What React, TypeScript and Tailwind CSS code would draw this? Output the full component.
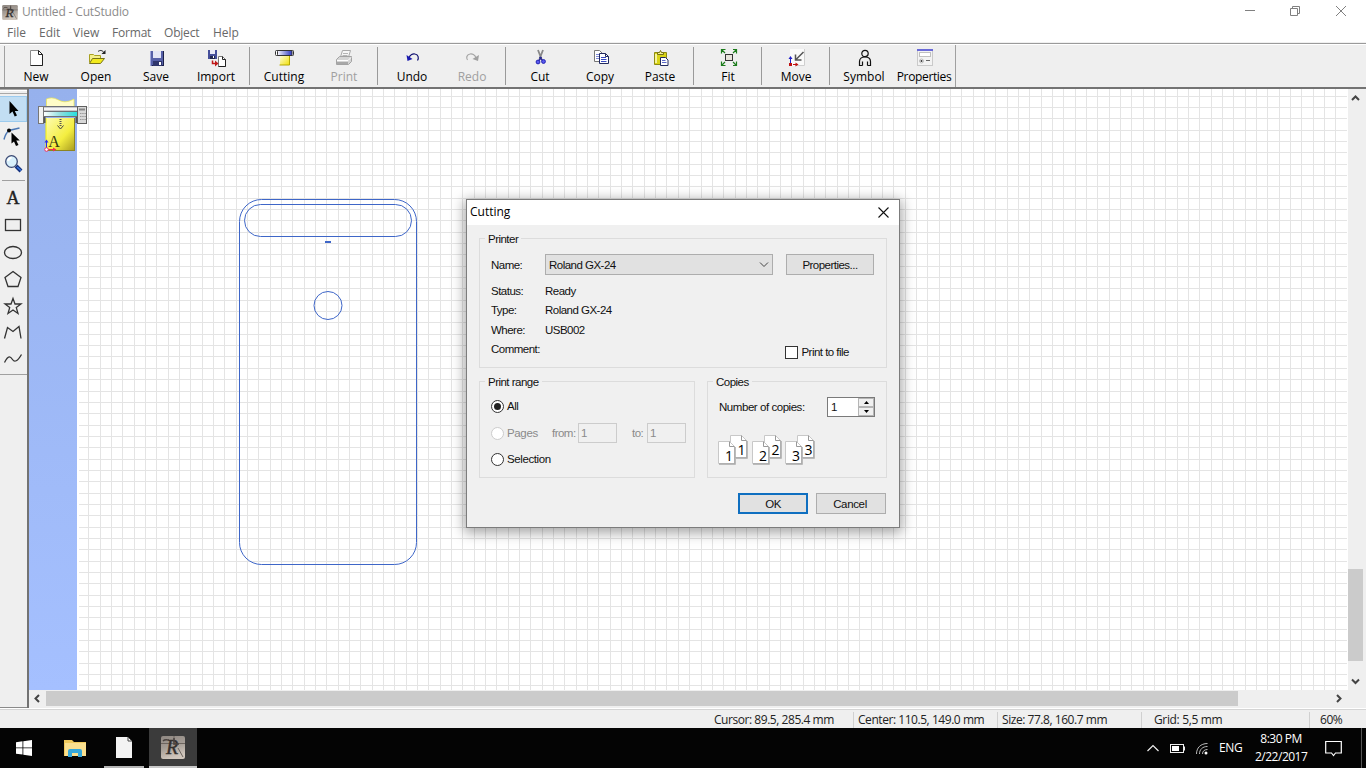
import type { ReactNode } from "react";

const GRID_STEP = 11.339;

interface ToolItem {
  label: string;
  icon: ReactNode;
  disabled?: boolean;
}

function Icon({ children, size = 20 }: { children: ReactNode; size?: number }) {
  return (
    <svg width={size} height={size} viewBox={`0 0 ${size} ${size}`} fill="none">
      {children}
    </svg>
  );
}

const newIcon = (
  <Icon>
    <path d="M4.5 1.5h8l4 4v11h-12z" fill="#fdfdfd" stroke="#8a8a8a" />
    <path d="M16.5 5.5v11h-12" stroke="#222" />
    <path d="M12.5 1.5v4h4z" fill="#fff" stroke="#222" />
  </Icon>
);

const openIcon = (
  <Icon>
    <path d="M3.5 13.5v-8h4l1 1h6v3" fill="#f4f08a" stroke="#a8a020" />
    <path d="M3.5 14.5l3-5h12l-4 5z" fill="#f2ea1c" stroke="#77721a" />
    <path d="M12 2.500c2-1.500 4-1.500 6 1" stroke="#222" />
    <path d="M19.500 1v4h-4z" fill="#222" />
  </Icon>
);

const saveIcon = (
  <Icon>
    <path d="M4 2h14v15H5l-1-1z" fill="#5660a8" />
    <path d="M4 2h1v14H4z" fill="#9fa6dc" />
    <path d="M17 2h1v15H6v-1h11z" fill="#1c2048" />
    <rect x="7" y="2" width="8" height="7" fill="#e4e6f6" />
    <rect x="7" y="12" width="9" height="5" fill="#30366c" />
    <rect x="13" y="13" width="2" height="3" fill="#fff" />
  </Icon>
);

const importIcon = (
  <Icon>
    <path d="M2 1h9v9H2z" fill="#454f9a" />
    <rect x="4" y="1" width="5" height="4" fill="#e8e9f7" />
    <rect x="4" y="7" width="5" height="3" fill="#20264f" />
    <rect x="7" y="7" width="1" height="2" fill="#fff" />
    <path d="M12.500 7.500h4l3 3v7h-7z" fill="#fff" stroke="#777" />
    <path d="M16.500 7.500v3h3v7h-7" stroke="#222" />
    <path d="M6.500 11.500v3h3" stroke="#c01818" strokeWidth="1.500" />
    <path d="M9 11.500l3.500 3-3.500 3z" fill="#c01818" />
  </Icon>
);

const cuttingIcon = (
  <Icon>
    <defs>
      <linearGradient id="cutBar">
        <stop offset="0" stopColor="#fff" />
        <stop offset="1" stopColor="#2e38c0" />
      </linearGradient>
      <linearGradient id="cutPaper" x1="0" y1="0" x2="1" y2="1">
        <stop offset="0" stopColor="#fffde0" />
        <stop offset="1" stopColor="#f1e000" />
      </linearGradient>
    </defs>
    <rect x="6" y="6" width="10" height="10" fill="url(#cutPaper)" />
    <path d="M15.500 7v9h-10" stroke="#b5a800" />
    <rect x="3" y="2" width="15" height="4" fill="url(#cutBar)" />
    <path d="M3 1.500h15M3 6.500h15" stroke="#333" />
    <rect x="1.500" y="1.500" width="2" height="5" rx="1" fill="#fff" stroke="#333" />
    <rect x="18" y="1.500" width="1.500" height="5" rx=".8" fill="#fff" stroke="#333" />
  </Icon>
);

const printIcon = (
  <Icon>
    <path d="M6.500 8l2-6.500h8l-2 6.500z" fill="#f7f7f7" stroke="#aaa" />
    <path d="M9 4.500h5M8.500 6.500h5" stroke="#b5b5b5" />
    <path d="M2.500 10.500l3-3h12v5l-3 3h-12z" fill="#d5d5d5" stroke="#a3a3a3" />
    <path d="M3 11.500h11l3-3" stroke="#fff" />
    <path d="M3 14h11" stroke="#999" strokeWidth="1.500" />
  </Icon>
);

const undoIcon = (
  <Icon>
    <path d="M7 9c1-3.500 4-4.500 6-4 3.500.7 4 4 2.500 6.500" stroke="#101070" strokeWidth="1.200" />
    <path d="M4.500 6l1 6 5-2z" fill="#1a1ab0" />
  </Icon>
);

const redoIcon = (
  <Icon>
    <path d="M14 9c-1-3.500-4-4.500-6-4-3.500.7-4 4-2.500 6" stroke="#a5a5a5" strokeWidth="1.200" />
    <path d="M17 6l-1 6-5.500-2z" fill="#a0a0a0" />
  </Icon>
);

const cutIcon = (
  <Icon>
    <path d="M8 1l3.500 9M13 1L9.500 10" stroke="#888" strokeWidth="1.800" />
    <path d="M9.500 8l3.500 4M11.500 8L8.500 12" stroke="#2a2a90" strokeWidth="1.400" />
    <circle cx="8" cy="13" r="1.900" fill="#5a5af0" stroke="#2424b4" />
    <circle cx="13.500" cy="12.500" r="1.900" fill="#5a5af0" stroke="#2424b4" />
  </Icon>
);

const copyIcon = (
  <Icon>
    <path d="M4.500 1.500h5l3 3v8h-8z" fill="#fff" stroke="#777" />
    <path d="M6 5.500h4M6 7.500h4M6 9.500h4" stroke="#7c88d8" />
    <path d="M9.500 4.500h6l3 3v7h-9z" fill="#fff" stroke="#222a60" />
    <path d="M11 8.500h5M11 10.500h5.500M11 12.500h5.500" stroke="#3848c0" />
    <path d="M15.500 4.500v3h3" stroke="#222a60" />
  </Icon>
);

const pasteIcon = (
  <Icon>
    <path d="M4.500 3.500h12v12h-12z" fill="#d9d416" stroke="#8e8a12" />
    <path d="M6 5v9" stroke="#f6f39a" strokeWidth="2" />
    <path d="M7.500 5.500v-2h2l1-2 1 2h2v2z" fill="#f4f09a" stroke="#777210" />
    <path d="M10.500 8.500h5l2.500 2.500v5.500h-7.500z" fill="#fff" stroke="#222a60" />
    <path d="M12 11.500h3.500M12 13.500h4.500" stroke="#5a68c8" />
  </Icon>
);

const fitIcon = (
  <Icon>
    <rect x="7.500" y="5.500" width="7" height="6" fill="#e8e4dc" stroke="#333" />
    <path
      d="M3.500 4.500v-4h4M4 1l3 3M15 .5h3.500v4M18 1l-3 3M3.500 12.500v4h4M4 16l3-3M15 16.500h3.500v-4M18 16l-3-3"
      stroke="#1c7c1c"
      strokeWidth="1.200"
    />
  </Icon>
);

const moveIcon = (
  <Icon>
    <rect x="4" y="0" width="15" height="17" fill="#fafafa" />
    <path d="M18.500 0v16.500H9" stroke="#cfcfcf" />
    <path d="M17.500 3L10 10.500M9.500 5.500v5.500h6" stroke="#555" strokeWidth="1.500" />
    <path d="M4.500 9v5" stroke="#2020c8" />
    <path d="M2.500 10l2-3 2 3z" fill="#2020c8" />
    <rect x="3" y="14" width="3" height="3" fill="#c01010" />
    <path d="M7 15.500h3" stroke="#c01010" />
    <path d="M9.500 13.500l3 2-3 2z" fill="#c01010" />
  </Icon>
);

const symbolIcon = (
  <Icon>
    <circle cx="11" cy="4.500" r="3.200" stroke="#111" strokeWidth="1.200" />
    <path
      d="M8.500 16.500v-4M13.500 16.500v-4M8.500 16.500h-3v-4c0-3 2-4.500 5.500-4.500s5.500 1.500 5.500 4.500v4h-3"
      stroke="#111"
      strokeWidth="1.200"
    />
  </Icon>
);

const propertiesIcon = (
  <Icon>
    <rect x="3.500" y=".5" width="15" height="16" fill="#f3f3f3" stroke="#cacaca" />
    <rect x="3" y="0" width="16" height="2" fill="#6a6ad8" />
    <rect x="5.500" y="3.500" width="11" height="4" fill="#fff" stroke="#c0c0c0" />
    <circle cx="7.500" cy="12" r="2" fill="#fff" stroke="#bbb" />
    <circle cx="7.500" cy="12" r="1" fill="#333" />
    <path d="M12 11.500h4" stroke="#666" />
  </Icon>
);

const toolbarGroups: ToolItem[][] = [
  [
    { label: "New", icon: newIcon },
    { label: "Open", icon: openIcon },
    { label: "Save", icon: saveIcon },
    { label: "Import", icon: importIcon },
  ],
  [
    { label: "Cutting", icon: cuttingIcon },
    { label: "Print", icon: printIcon, disabled: true },
  ],
  [
    { label: "Undo", icon: undoIcon },
    { label: "Redo", icon: redoIcon, disabled: true },
  ],
  [
    { label: "Cut", icon: cutIcon },
    { label: "Copy", icon: copyIcon },
    { label: "Paste", icon: pasteIcon },
  ],
  [{ label: "Fit", icon: fitIcon }],
  [{ label: "Move", icon: moveIcon }],
  [
    { label: "Symbol", icon: symbolIcon },
    { label: "Properties", icon: propertiesIcon },
  ],
];

function AppLogo({ big = false }: { big?: boolean }) {
  return (
    <svg width={big ? 24 : 16} height={big ? 23 : 15} viewBox="0 0 24 23">
      <defs>
        <linearGradient id="stone" x1="0" y1="0" x2=".3" y2="1">
          <stop offset="0" stopColor="#8f8882" />
          <stop offset=".5" stopColor="#a39b94" />
          <stop offset="1" stopColor="#d0c6bc" />
        </linearGradient>
      </defs>
      <rect width="24" height="23" rx="2" fill="url(#stone)" />
      <path d="M0 7.500h24M13 0v9M17 12l5 9" stroke="#6c645e" strokeWidth="1" />
      <text x="5" y="18" fontFamily="Liberation Serif, serif" fontSize="20" fontStyle="italic" fill="#35302e" stroke="#35302e" strokeWidth=".4">
        R
      </text>
      <path d="M2 5c2-2 4-1 6-1M13 2v6h5" stroke="#4a4340" strokeWidth="1.500" fill="none" />
    </svg>
  );
}

function TitleBar() {
  return (
    <div className="flex h-6 items-center bg-white pl-0.5 text-[#8c8c8c]">
      <AppLogo />
      <span className="ml-1 tracking-[-0.15px]">Untitled - CutStudio</span>
      <svg className="ml-auto mr-[18px]" width="104" height="12" viewBox="0 0 104 12" fill="none" stroke="#808080">
        <path d="M1 4.500h10" />
        <path d="M46.500 2.500h7v7h-7zM48.500 2.500v-2h7v7h-2" />
        <path d="M92 0l10 10M102 0L92 10" />
      </svg>
    </div>
  );
}

function MenuBar() {
  return (
    <div className="flex h-[18px] items-center bg-white pl-[7px] text-[#686868]">
      <span className="w-8">File</span>
      <span className="w-[34px]">Edit</span>
      <span className="w-[39px]">View</span>
      <span className="w-[52px] tracking-[-0.2px]">Format</span>
      <span className="w-[49px] tracking-[-0.2px]">Object</span>
      <span>Help</span>
    </div>
  );
}

function Toolbar() {
  return (
    <div className="flex h-[46px] border-t border-b-2 border-t-[#9a9a9a] border-b-[#737373] bg-[#efefef] shadow-[inset_0_1px_0_#fff]">
      <div className="mt-0.5 mr-px w-[5px] border-r border-[#a0a0a0]" />
      {toolbarGroups.map((group, i) => (
        <div key={i} className="flex">
          {i > 0 && <div className="mt-[3px] mr-1 ml-[3px] h-[38px] w-px bg-[#9a9a9a]" />}
          {group.map((item) => (
            <div key={item.label} className="flex w-[60px] flex-col items-center pt-[5px]">
              {item.icon}
              <span
                className={`h-4 text-[12px] leading-4 whitespace-nowrap ${item.disabled ? "text-[#a0a0a0]" : "text-black"} ${item.label === "Properties" ? "tracking-[-0.35px]" : ""}`}
              >
                {item.label}
              </span>
            </div>
          ))}
        </div>
      ))}
      <div className="mt-px ml-px w-px bg-[#a0a0a0]" />
    </div>
  );
}

// tools of the left strip, drawn in a 27px wide column
function ToolStrip() {
  return (
    <div className="h-[619px] w-[27px] shrink-0 border-b border-[#8a8a8a] bg-[#efefef]">
      <svg width="27" height="618" viewBox="0 89 27 618" fill="none" stroke="#333" strokeWidth="1.300">
        <path d="M0 89.500h27M0 93.500h27" stroke="#a8a8a8" strokeWidth="1" />
        <path d="M0 90.500h27" stroke="#fff" strokeWidth="1" />
        <rect x="-.5" y="96.500" width="27" height="25" fill="#c2def3" stroke="#9ccbee" strokeWidth="1" />
        <path d="M9.500 101v13l3-2.500 2.200 5 2.300-1-2.200-4.500h3.700z" fill="#000" stroke="none" />
        <path d="M4 139.500c1-4 2.500-7 5-9l10.500-2.500" stroke="#4d78b4" strokeWidth="1.500" />
        <circle cx="9" cy="130.500" r="2" fill="#000" stroke="none" />
        <path d="M11.500 132.500v11l2.500-2 2 4.500 2.500-1-2.200-4.500h3.500z" fill="#000" stroke="none" />
        <path d="M16 166l5 5" stroke="#14307c" strokeWidth="4" />
        <path d="M17 167l4 3.500" stroke="#3878e0" strokeWidth="1.500" />
        <circle cx="11.500" cy="161.500" r="5.800" fill="#d8f0fc" stroke="#3b4a74" />
        <path d="M8 161c.5-2 1.500-3 3.500-3.300" stroke="#fff" strokeWidth="2" />
        <path d="M2 180.500h23" stroke="#a0a0a0" strokeWidth="1" />
        <text x="13" y="203.500" textAnchor="middle" fontFamily="Liberation Serif, serif" fontSize="18" fill="#222" stroke="#222" strokeWidth=".4">
          A
        </text>
        <rect x="5.500" y="219.500" width="15" height="11" />
        <ellipse cx="13" cy="252.500" rx="8.500" ry="6" />
        <path d="M13 271.500l8 6-3 9H8l-3-9z" />
        <path d="M13 298.500l2 5.500h6l-4.700 3.600 1.700 5.900-5-3.500-5 3.500 1.700-5.900L5 304h6z" />
        <path d="M4.500 338.500l3-11 5.500 4 6-5 2 12" />
        <path d="M4.500 362.500c4-8 6-6 8-3s5 2 9-5" />
        <path d="M0 374.500h27" stroke="#a0a0a0" strokeWidth="1" />
      </svg>
    </div>
  );
}

function Plotter() {
  return (
    <g>
      <defs>
        <linearGradient id="sheet" x1="0" y1="0" x2="1" y2="1">
          <stop offset="0" stopColor="#fdfbb0" />
          <stop offset=".6" stopColor="#f4ee40" />
          <stop offset="1" stopColor="#a89c20" />
        </linearGradient>
        <linearGradient id="beam">
          <stop offset="0" stopColor="#fff" />
          <stop offset=".5" stopColor="#8adede" />
          <stop offset="1" stopColor="#20dede" />
        </linearGradient>
      </defs>
      <path d="M46.500 108v-9c5-2 8-1 12 1s8 3 15.500-1v9z" fill="#fffcc8" stroke="#f0e84a" strokeWidth=".7" />
      <rect x="46" y="118" width="29" height="32" fill="url(#sheet)" />
      <path d="M46 150.500h29M74.500 118v32" stroke="#8c8420" />
      <path d="M46 118v32" stroke="#f8f400" />
      <rect x="44" y="107" width="34" height="10" fill="#c9c9cc" />
      <rect x="44" y="108" width="34" height="2" fill="#f5f5f5" />
      <path d="M44 106.500h34M44 111.500h34M44 116.500h34" stroke="#6e7076" />
      <rect x="44" y="112" width="34" height="4" fill="url(#beam)" />
      <rect x="38.500" y="106.500" width="5" height="17" fill="#f2f2f2" stroke="#777" />
      <path d="M44.500 117v6M76.500 117v6" stroke="#555" strokeWidth="2" />
      <rect x="77.500" y="106.500" width="9" height="17" fill="#d8d8d8" stroke="#606060" />
      <path d="M79 109.500h6" stroke="#888" strokeWidth="2" />
      <path d="M80 113.500h6M80 116.500h6M80 119.500h6" stroke="#999" strokeDasharray="1.500 .7" />
      <path d="M60.500 119v8" stroke="#555" strokeWidth="2" strokeDasharray="1 1" />
      <path d="M57.500 125.500l3 3.500 3-3.500" stroke="#444" fill="none" />
      <text x="54" y="147" textAnchor="middle" fontFamily="Liberation Serif, serif" fontSize="16" fill="#3a3a10">
        A
      </text>
      <path d="M46.500 148v-7" stroke="#2828f0" />
      <path d="M44.500 142.500l2-3 2 3z" fill="#2828f0" />
      <path d="M47 149.500h7" stroke="#f03050" />
      <path d="M53 147.500l3.500 2-3.500 2z" fill="#f03050" />
      <circle cx="46.500" cy="149.500" r="1.800" fill="#fff" stroke="#f03060" />
    </g>
  );
}

function Canvas() {
  const columns = Array.from({ length: 111 }, (_, i) => Math.round(88.2 + i * GRID_STEP));
  const rows = Array.from({ length: 53 }, (_, i) => Math.round(95.7 + i * GRID_STEP));

  return (
    <svg width="1319" height="601" viewBox="29 89 1319 601" className="block">
      <defs>
        <linearGradient id="margin" x1="0" y1="0" x2="0" y2="1">
          <stop offset="0" stopColor="#96b1ed" />
          <stop offset="1" stopColor="#a5c0ff" />
        </linearGradient>
      </defs>
      <rect x="29" y="89" width="1319" height="601" fill="#fff" />
      <g stroke="#e4e4e4">
        {columns.map((x) => (
          <path key={x} d={`M${x + 0.5} 89v601`} />
        ))}
        {rows.map((y) => (
          <path key={y} d={`M79 ${y + 0.5}H1347`} />
        ))}
      </g>
      <rect x="29" y="89" width="48" height="601" fill="url(#margin)" />
      <g fill="none" stroke="#3e66c8">
        <rect x="239.500" y="199.500" width="177" height="365" rx="22" />
        <rect x="244.500" y="204.500" width="167" height="32" rx="16" />
        <circle cx="328" cy="305.500" r="14" />
        <path d="M325 242h6" strokeWidth="2" />
      </g>
      <Plotter />
    </svg>
  );
}

function VerticalScroll() {
  return (
    <div className="flex h-[601px] w-[15px] flex-col items-center bg-[#efefef]">
      <svg width="15" height="16" viewBox="0 0 15 16" fill="none" stroke="#444" strokeWidth="2">
        <path d="M4 11l3.500-3.500L11 11" />
      </svg>
      <div className="mt-[464px] h-[92px] w-full bg-[#cbcbcb]" />
      <svg className="mt-[11px]" width="15" height="16" viewBox="0 0 15 16" fill="none" stroke="#444" strokeWidth="2">
        <path d="M4 7.500L7.500 11 11 7.500" />
      </svg>
    </div>
  );
}

function HorizontalScroll() {
  return (
    <div className="flex h-[18px] items-center bg-[#efefef] pt-px pb-0.5">
      <svg width="17" height="15" viewBox="0 0 17 15" fill="none" stroke="#444" strokeWidth="2">
        <path d="M10 4L6.500 7.500 10 11" />
      </svg>
      <div className="h-[15px] w-[1192px] bg-[#cbcbcb]" />
      <svg className="ml-[92px]" width="17" height="15" viewBox="0 0 17 15" fill="none" stroke="#444" strokeWidth="2">
        <path d="M7 4l3.500 3.500L7 11" />
      </svg>
    </div>
  );
}

function StatusBar() {
  return (
    <div className="mt-px flex h-[19px] border-t border-[#d4d4d4] bg-[#efefef] pt-0.5 leading-4 tracking-[-0.45px] text-[#222]">
      <div className="ml-[714px] w-[139px]">Cursor: 89.5, 285.4 mm</div>
      <div className="w-36 border-l border-[#d0d0d0] pl-1">Center: 110.5, 149.0 mm</div>
      <div className="w-36 border-l border-[#d0d0d0] pl-1">Size: 77.8, 160.7 mm</div>
      <div className="w-[168px] border-l border-[#d0d0d0] pl-3 tracking-[-0.35px]">Grid: 5,5 mm</div>
      <div className="border-l border-[#d0d0d0] pl-2.5">60%</div>
    </div>
  );
}

function Group({ title, className, children }: { title: string; className: string; children: ReactNode }) {
  return (
    <div className={`border border-[#dcdcdc] ${className}`}>
      <div className="-mt-2 ml-[5px] h-4 w-fit bg-[#f0f0f0] px-[3px] leading-4">{title}</div>
      {children}
    </div>
  );
}

function Radio({ label, checked, disabled }: { label: string; checked?: boolean; disabled?: boolean }) {
  return (
    <div className={`flex items-center ${disabled ? "text-[#8a8a8a]" : ""}`}>
      <div
        className={`mr-[3px] flex size-[13px] items-center justify-center rounded-full border bg-white ${disabled ? "border-[#ccc]" : "border-[#333]"}`}
      >
        {checked && <div className="size-[7px] rounded-full bg-[#222]" />}
      </div>
      {label}
    </div>
  );
}

function CopySheets({ n }: { n: number }) {
  return (
    <svg width="33" height="31" viewBox="0 0 33 31" fill="none">
      <path d="M12.500 1.500h11l5 5v17h-16z" fill="#fff" stroke="#c8c8c8" />
      <path d="M29 7v17H18" stroke="#a8a8a8" strokeWidth="1.500" />
      <path d="M23.500 1.500v5h5" stroke="#999" />
      <text x="19.500" y="21" fontFamily="Open Sans, sans-serif" fontSize="14" fill="#000">{n}</text>
      <path d="M.5 7.500h11l5 5v17H.5z" fill="#fff" stroke="#c8c8c8" />
      <path d="M17 13v17H1" stroke="#a8a8a8" strokeWidth="1.500" />
      <path d="M11.500 7.500v5h5" stroke="#999" />
      <text x="7" y="27" fontFamily="Open Sans, sans-serif" fontSize="14" fill="#000">{n}</text>
    </svg>
  );
}

function CuttingDialog() {
  const details = [
    { label: "Status:", value: "Ready" },
    { label: "Type:", value: "Roland GX-24" },
    { label: "Where:", value: "USB002" },
    { label: "Comment:", value: "" },
  ];

  return (
    <div className="absolute top-[199px] left-[466px] h-[329px] w-[434px] border border-[#7c7c7c] bg-[#f0f0f0] font-['Liberation_Sans',sans-serif] text-[11.5px] tracking-[-0.52px] text-[#111] shadow-[0_3px_12px_2px_rgba(0,0,0,0.35)]">
      <div className="flex h-[25px] items-center bg-white pr-[10px] pl-[3px]">
        <span className="-mt-px font-['Open_Sans',sans-serif] text-[12px] tracking-normal text-black">Cutting</span>
        <svg className="ml-auto" width="11" height="11" viewBox="0 0 11 11" stroke="#111" strokeWidth="1.100">
          <path d="M.5.5l10 10M10.500.5l-10 10" />
        </svg>
      </div>

      <div className="px-3 pt-[13px]">
        <Group title="Printer" className="h-[130px] w-[408px]">
          <div className="mt-[7px] flex h-[21px] items-center pl-[11px]">
            <span className="w-[54px]">Name:</span>
            <div className="flex h-[21px] w-[228px] items-center border border-[#adadad] bg-[#e1e1e1] pr-[3px] pl-[3px]">
              Roland GX-24
              <svg className="ml-auto" width="10" height="6" viewBox="0 0 10 6" fill="none" stroke="#444">
                <path d="M1 .5l4 4 4-4" />
              </svg>
            </div>
            <button className="ml-[13px] h-[21px] w-[88px] border border-[#adadad] bg-[#e1e1e1]">Properties...</button>
          </div>
          <div className="flex pt-1.5 pl-[11px]">
            <div>
              {details.map((d) => (
                <div key={d.label} className="flex h-[19.5px] items-center">
                  <span className="w-[54px]">{d.label}</span>
                  <span>{d.value}</span>
                </div>
              ))}
            </div>
            <div className="-mb-px ml-auto flex items-end pr-[37px]">
              <div className="mr-[3px] mb-px size-[13px] border border-[#333] bg-white" />
              <span className="leading-[15px]">Print to file</span>
            </div>
          </div>
        </Group>

        <div className="mt-[13px] flex gap-3">
          <Group title="Print range" className="h-[97px] w-[216px]">
            <div className="flex flex-col pt-[5px] pl-[11px]">
              <div className="flex h-[22px] items-center">
                <Radio label="All" checked />
              </div>
              <div className="mt-[5px] flex h-[22px] items-center text-[#8a8a8a]">
                <div className="w-[61px] tracking-[-0.35px]">
                  <Radio label="Pages" disabled />
                </div>
                <span className="w-[26px]">from:</span>
                <div className="h-5 w-[39px] border border-[#ccc] pl-[2px] leading-[18px]">1</div>
                <span className="ml-[15px] w-[15px]">to:</span>
                <div className="h-5 w-[39px] border border-[#ccc] pl-[2px] leading-[18px]">1</div>
              </div>
              <div className="mt-1 flex h-[22px] items-center tracking-[-0.4px]">
                <Radio label="Selection" />
              </div>
            </div>
          </Group>
          <Group title="Copies" className="h-[97px] w-[180px]">
            <div className="flex items-center pt-[7px] pl-[11px]">
              <span className="w-[108px] tracking-[-0.45px]">Number of copies:</span>
              <div className="flex h-5 w-12 border border-[#7a7a7a] bg-white">
                <span className="w-[30px] pl-[3px] leading-[18px]">1</span>
                <div className="flex w-4 flex-col bg-[#f0f0f0]">
                  <div className="flex flex-1 items-center justify-center border border-[#b5b5b5]">
                    <svg width="5" height="3" viewBox="0 0 5 3">
                      <path d="M0 3L2.500 0 5 3z" />
                    </svg>
                  </div>
                  <div className="flex flex-1 items-center justify-center border border-[#b5b5b5]">
                    <svg width="5" height="3" viewBox="0 0 5 3">
                      <path d="M0 0l2.500 3L5 0z" />
                    </svg>
                  </div>
                </div>
              </div>
            </div>
            <div className="mt-[17px] flex gap-[0.5px] pl-[10px]">
              <CopySheets n={1} />
              <CopySheets n={2} />
              <CopySheets n={3} />
            </div>
          </Group>
        </div>

        <div className="mt-[15px] flex justify-end gap-2 pr-px">
          <button className="h-[21px] w-[70px] border-2 border-[#0f6fc0] bg-[#e1e1e1]">OK</button>
          <button className="h-[21px] w-[70px] border border-[#adadad] bg-[#e1e1e1] pr-0.5 tracking-[-0.35px]">Cancel</button>
        </div>
      </div>
    </div>
  );
}

function Taskbar() {
  return (
    <div className="flex h-10 bg-[#040404] text-white">
      <div className="flex w-12 items-center justify-center">
        <svg width="16" height="16" viewBox="0 0 16 16" fill="#fff">
          <path d="M0 2.200l6.500-.9v6.200H0zM7.300 1.200L16 0v7.500H7.300zM0 8.300h6.500v6.300L0 13.700zM7.300 8.300H16V16l-8.700-1.300z" />
        </svg>
      </div>
      <div className="ml-[3px] flex w-12 items-center justify-center">
        <svg width="22" height="19" viewBox="0 0 22 19">
          <path d="M0 1h8l2 2h12v14H0z" fill="#f0c95c" />
          <path d="M1 4h21v13H1z" fill="#fbe08f" />
          <path d="M4 18v-6q0-2 2-2h10q2 0 2 2v6h-4v-4H8v4z" fill="#36a8da" />
        </svg>
      </div>
      <div className="ml-[5px] flex w-10 flex-col items-center border-b-2 border-[#b5b5b5] pt-[9px]">
        <svg width="16" height="22" viewBox="0 0 16 22">
          <path d="M0 0h12l4 4v17H0z" fill="#f3f3f3" />
          <path d="M12 0v4h4z" fill="#fff" stroke="#444" />
        </svg>
      </div>
      <div className="ml-[5px] flex w-12 items-center justify-center border-b-2 border-[#c8c8c8] bg-[#3b3b3b]">
        <AppLogo big />
      </div>
      <div className="ml-auto flex items-center">
        <svg width="64" height="16" viewBox="0 0 64 16" fill="none" stroke="#eee">
          <path d="M1.500 11L7 5.500 12.500 11" strokeWidth="1.200" />
          <rect x="24.500" y="4.500" width="13" height="8" />
          <path d="M38.500 6.500v4" />
          <rect x="26" y="6" width="7" height="5" fill="#fff" stroke="none" />
          <path d="M50.500 14c0-6 4-10.500 11-10.500M53.500 14c0-4.500 3-7.500 8-7.500M56.500 14c0-3 2-4.500 5-4.500" stroke="#bbb" />
          <circle cx="60" cy="13" r="1.500" fill="#fff" stroke="none" />
        </svg>
        <span className="ml-[9px] w-9 tracking-[-0.4px]">ENG</span>
        <div className="w-[52px] text-center leading-[18px] tracking-[-0.5px] whitespace-nowrap">
          <div>8:30 PM</div>
          <div>2/22/2017</div>
        </div>
        <svg className="ml-[18px]" width="17" height="17" viewBox="0 0 17 17" fill="none" stroke="#fff" strokeWidth="1.200">
          <path d="M.7 1.500h15.600v11.500h-5.800l-2 2.500-2-2.500H.7z" />
        </svg>
        <div className="ml-[19px] h-10 w-[5px] border-l border-[#555]" />
      </div>
    </div>
  );
}

export default function App() {
  return (
    <div className="relative h-[768px] w-[1366px] overflow-hidden bg-white font-['Open_Sans',sans-serif] text-[12px] leading-4">
      <TitleBar />
      <MenuBar />
      <div className="h-px bg-[#f0f0f0]" />
      <Toolbar />
      <div className="flex h-[619px] bg-[#efefef]">
        <ToolStrip />
        <div className="w-[1337px] border-l-2 border-[#737373]">
          <div className="flex">
            <Canvas />
            <VerticalScroll />
          </div>
          <HorizontalScroll />
        </div>
      </div>
      <StatusBar />
      <Taskbar />
      <CuttingDialog />
    </div>
  );
}
